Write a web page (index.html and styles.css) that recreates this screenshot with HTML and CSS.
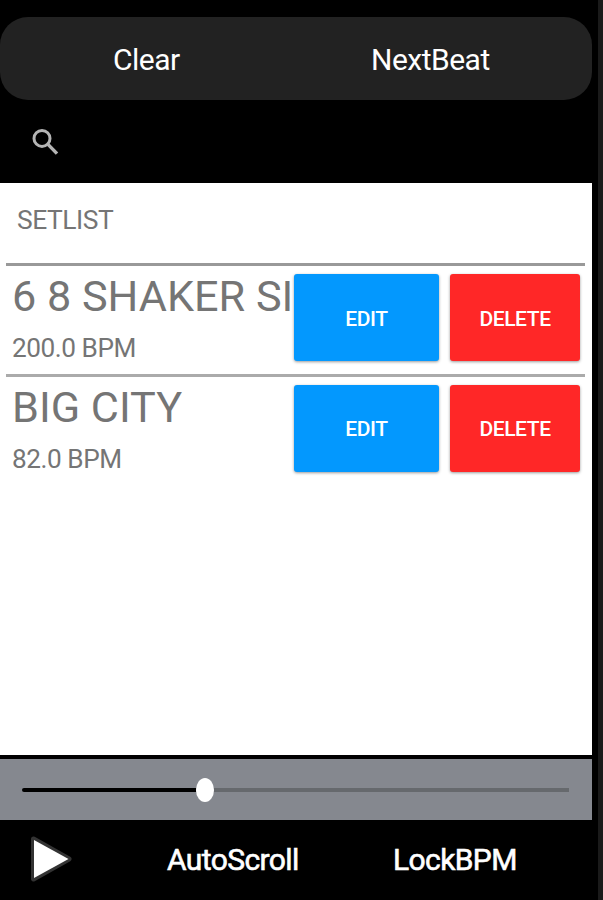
FILE: index.html
```html
<!DOCTYPE html>
<html lang="en">
<head>
    <meta charset="UTF-8">
    <meta name="viewport" content="width=device-width, initial-scale=1.0">
    <title>Setlist</title>
    <link rel="stylesheet" href="styles.css">
</head>
<body>

    <div class="screen">
        <div class="top-bar">
            <span class="clear">Clear</span>
            <span class="next-beat">NextBeat</span>
        </div>

        <div class="search">
            <svg class="search-icon" viewBox="0 0 28 28">
                <circle cx="10" cy="10.4" r="8" fill="none" stroke="#b4b4b4" stroke-width="3"/>
                <path d="M16 16.4L25 25.6" stroke="#b4b4b4" stroke-width="3.4"/>
            </svg>
        </div>

        <div class="list">
            <div class="list-title">SETLIST</div>
            <div class="song">
                <div class="song-info">
                    <div class="song-name">6 8 SHAKER SI</div>
                    <div class="song-bpm">200.0 BPM</div>
                </div>
                <button class="btn edit">EDIT</button>
                <button class="btn delete">DELETE</button>
            </div>
            <div class="song second">
                <div class="song-info">
                    <div class="song-name">BIG CITY</div>
                    <div class="song-bpm">82.0 BPM</div>
                </div>
                <button class="btn edit">EDIT</button>
                <button class="btn delete">DELETE</button>
            </div>
        </div>

        <div class="slider">
            <div class="track-done"></div>
            <div class="thumb"></div>
            <div class="track-left"></div>
        </div>

        <div class="bottom-bar">
            <svg class="play" viewBox="0 0 46 50">
                <path d="M5.5 5L41 25L5.5 45Z" fill="#fff" stroke="#333" stroke-width="5" stroke-linejoin="round"/>
                <path d="M6 6L40.5 25L6 44Z" fill="#fff"/>
            </svg>
            <span class="auto-scroll">AutoScroll</span>
            <span class="lock-bpm">LockBPM</span>
        </div>
    </div>

</body>
</html>
```

FILE: styles.css
```css
* {
    box-sizing: border-box;
}

body {
    margin: 0;
    height: 900px;
    background-color: #000;
    border-right: 5px solid #1a1a1a;
    font-family: Roboto, sans-serif;
    overflow: hidden;
}

.screen {
    width: 592px;
    height: 900px;
    padding-top: 17px;
    display: flex;
    flex-direction: column;
}

.top-bar {
    height: 83px;
    border-radius: 28px;
    background-color: #222;
    color: #fff;
    font-size: 30px;
    letter-spacing: -0.5px;
    line-height: 86px;
    display: flex;
}

.clear {
    width: 371px;
    padding-left: 113px;
}

.search {
    height: 83px;
    padding: 28px 0 0 32px;
}

.search-icon {
    display: block;
    width: 28px;
    height: 28px;
}

.list {
    height: 572px;
    padding: 0 7px 0 6px;
    background-color: #fff;
    color: #757575;
}

.list-title {
    height: 80px;
    padding-left: 11px;
    font-size: 26.4px;
    letter-spacing: -0.45px;
    line-height: 74px;
}

.song {
    height: 110.5px;
    padding: 8px 5px 0 6px;
    border-top: 3px solid #999;
    display: flex;
}

.song.second {
    border-top-color: #ababab;
}

.song-info {
    width: 282px;
    white-space: nowrap;
}

.song-name {
    margin-top: -2px;
    font-size: 43.2px;
    line-height: 50px;
}

.song-bpm {
    font-size: 26.2px;
    letter-spacing: -0.45px;
    line-height: 30px;
    margin-top: 11px;
}

.btn {
    height: 87px;
    padding: 2px 0 0;
    border: none;
    border-radius: 3px;
    color: #fff;
    font-family: inherit;
    font-size: 21px;
    font-weight: 500;
    letter-spacing: -0.4px;
    box-shadow: 0 1px 3px rgba(0, 0, 0, 0.4);
}

.edit {
    width: 145px;
    margin-right: 11px;
    background-color: #0398fe;
}

.delete {
    width: 130px;
    background-color: #ff2727;
}

.slider {
    height: 65px;
    padding: 0 23px 0 22px;
    border-top: 4px solid #000;
    background-color: #85888f;
    display: flex;
    align-items: center;
}

.track-done {
    width: 174px;
    height: 4px;
    border-radius: 2px 0 0 2px;
    background-color: #000;
}

.thumb {
    width: 18px;
    height: 24px;
    border-radius: 50%;
    background-color: #fff;
}

.track-left {
    flex: 1;
    height: 4px;
    background-color: #66696d;
}

.bottom-bar {
    height: 80px;
    padding-left: 28px;
    color: #fff;
    font-size: 30px;
    letter-spacing: -0.6px;
    line-height: 79px;
    -webkit-text-stroke: 0.6px #fff;
    display: flex;
}

.play {
    width: 46px;
    height: 50px;
    margin-top: 14px;
}

.auto-scroll {
    width: 226px;
    margin-left: 93px;
}
```
